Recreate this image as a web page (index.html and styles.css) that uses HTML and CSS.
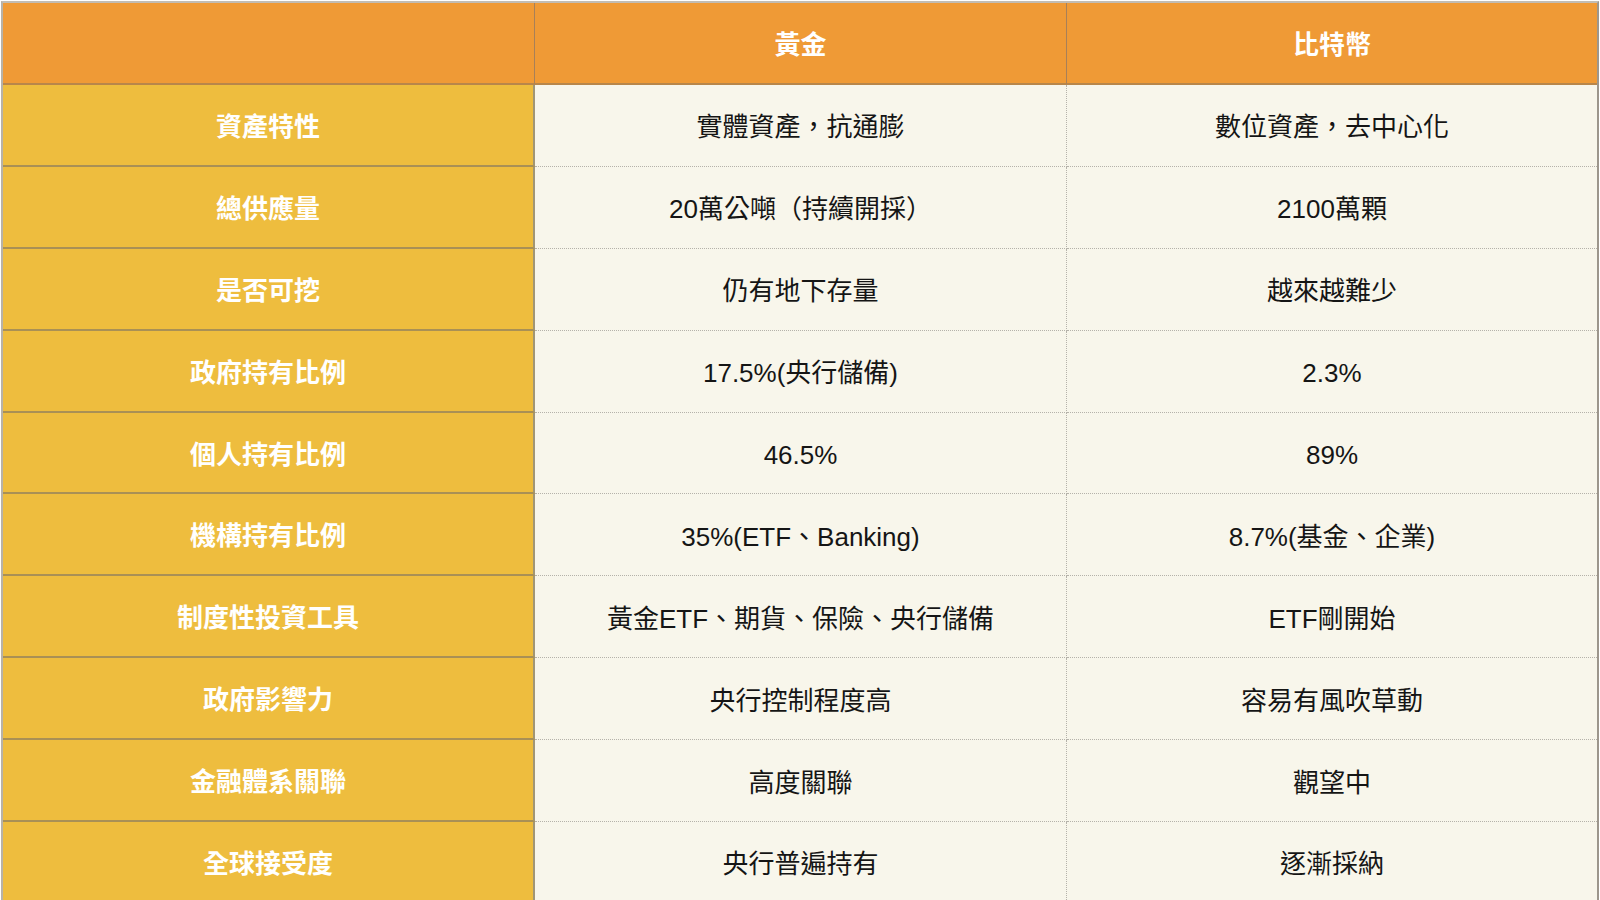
FILE: index.html
```html
<!DOCTYPE html>
<html lang="zh-Hant">
<head>
<meta charset="utf-8">
<link rel="stylesheet" href="styles.css">
</head>
<body>
<div class="table">
  <div class="cell head"></div>
  <div class="cell head">黃金</div>
  <div class="cell head last">比特幣</div>

  <div class="cell label">資產特性</div>
  <div class="cell data">實體資產，抗通膨</div>
  <div class="cell data last">數位資產，去中心化</div>

  <div class="cell label">總供應量</div>
  <div class="cell data">20萬公噸（持續開採）</div>
  <div class="cell data last">2100萬顆</div>

  <div class="cell label">是否可挖</div>
  <div class="cell data">仍有地下存量</div>
  <div class="cell data last">越來越難少</div>

  <div class="cell label">政府持有比例</div>
  <div class="cell data">17.5%(央行儲備)</div>
  <div class="cell data last">2.3%</div>

  <div class="cell label">個人持有比例</div>
  <div class="cell data">46.5%</div>
  <div class="cell data last">89%</div>

  <div class="cell label">機構持有比例</div>
  <div class="cell data">35%(ETF、Banking)</div>
  <div class="cell data last">8.7%(基金、企業)</div>

  <div class="cell label">制度性投資工具</div>
  <div class="cell data">黃金ETF、期貨、保險、央行儲備</div>
  <div class="cell data last">ETF剛開始</div>

  <div class="cell label">政府影響力</div>
  <div class="cell data">央行控制程度高</div>
  <div class="cell data last">容易有風吹草動</div>

  <div class="cell label">金融體系關聯</div>
  <div class="cell data">高度關聯</div>
  <div class="cell data last">觀望中</div>

  <div class="cell label">全球接受度</div>
  <div class="cell data">央行普遍持有</div>
  <div class="cell data last">逐漸採納</div>
</div>
</body>
</html>
```

FILE: styles.css
```css
html, body {
  margin: 0;
  padding: 0;
  background: #ffffff;
  overflow: hidden;
}

body {
  width: 1600px;
  height: 900px;
  font-family: "Liberation Sans", "Noto Sans CJK TC", sans-serif;
}

.table {
  margin: 1px 1px 0 1px;
  border-top: 2px solid #c2bdb4;
  border-left: 2px solid #b7b2a8;
  border-right: 2px solid #9c968c;
  display: grid;
  grid-template-columns: 532px 532px 1fr;
  grid-template-rows: 82px;
  grid-auto-rows: 81.9px;
}

.cell {
  box-sizing: border-box;
  display: flex;
  align-items: center;
  justify-content: center;
  padding-top: 4px;
  font-size: 26px;
  line-height: 1;
}

.head {
  background: #ef9a36;
  color: #ffffff;
  font-weight: 700;
  border-bottom: 2px solid #b8864a;
  border-right: 1px solid #a88058;
}

.head.last {
  border-right: none;
}

.label {
  background: #eebd3e;
  color: #ffffff;
  font-weight: 700;
  border-bottom: 2px solid #a99055;
  border-right: 2px solid #a19675;
}

.data {
  background: #f8f6eb;
  color: #151515;
  font-weight: 400;
  border-bottom: 1px dotted #b5b2aa;
  border-right: 1px dotted #b5b2aa;
}

.data.last {
  border-right: none;
}
```
